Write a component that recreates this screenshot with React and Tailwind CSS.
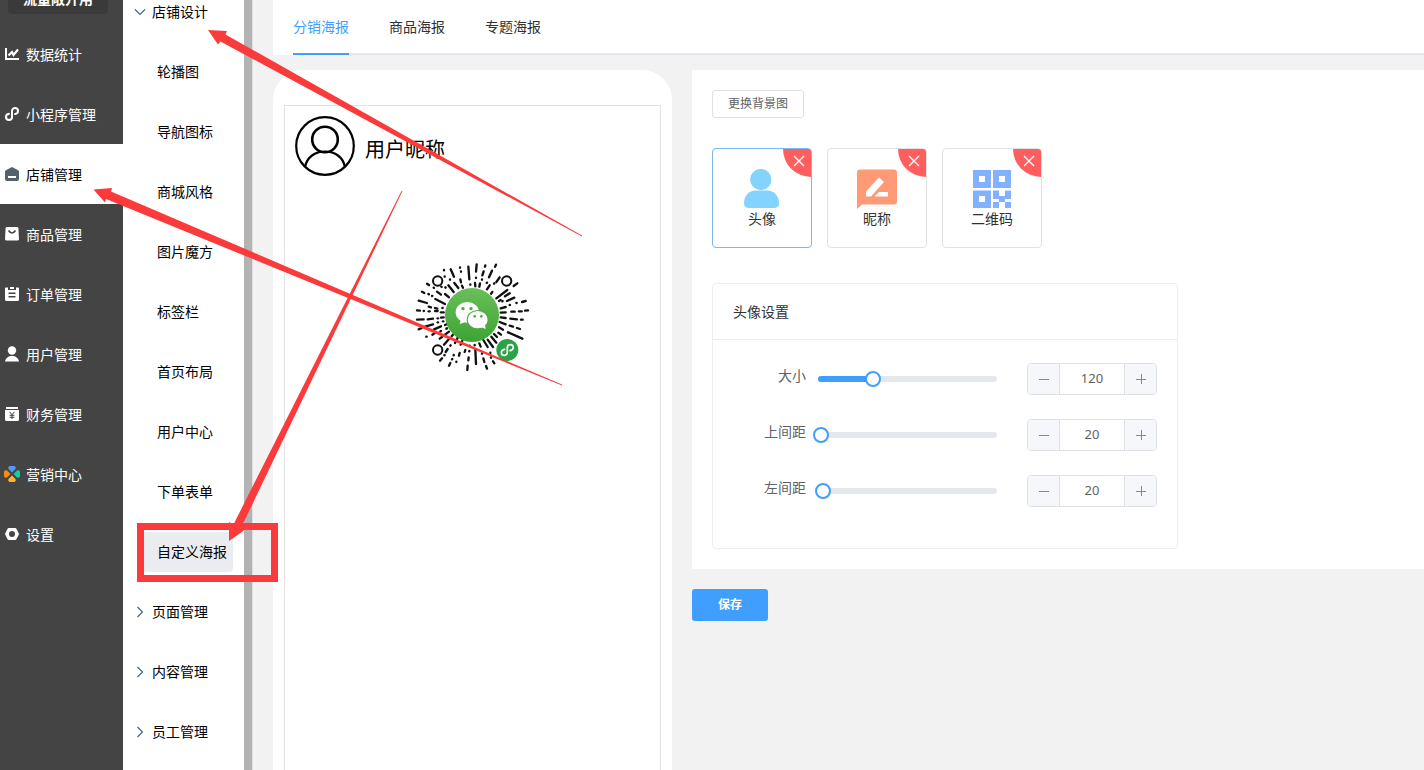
import React, { useState } from "react";

const ChartIcon = () => (
  <svg viewBox="0 0 14 14" className="w-3.5 h-3.5" fill="none" stroke="currentColor">
    <path d="M1 1v11h13" strokeWidth="2" />
    <path d="M3.5 8.5 7 5l1.500 3 4.500-5.500" strokeWidth="2.200" />
  </svg>
);

const MiniAppIcon = () => (
  <svg viewBox="0 0 14 14" className="w-3.5 h-3.5" fill="none" stroke="currentColor" strokeWidth="2" strokeLinecap="round">
    <path d="M4 6.800C2.200 7 1 8.200 1 9.900 1 11.600 2.300 12.900 4 12.900s3-1.300 3-3V4.100c0-1.700 1.300-3 3-3s3 1.300 3 3c0 1.700-1.200 2.800-2.900 3" />
  </svg>
);

const ShopIcon = () => (
  <svg viewBox="0 0 14 14" className="w-3.5 h-3.5" fill="#56606b">
    <path d="M7 0 13.200 3.200Q14 3.800 14 4.800V12q0 2-2 2H2q-2 0-2-2V4.800Q0 3.800.8 3.200Z" />
    <rect x="3" y="9" width="8" height="2" fill="#fff" />
  </svg>
);

const GoodsIcon = () => (
  <svg viewBox="0 0 14 14" className="w-3.5 h-3.5">
    <path d="M2 0h10q1.300 0 1.400 1.300L14 12q0 1.500-1.500 1.500h-11Q0 13.500 0 12L.6 1.300Q.7 0 2 0Z" fill="currentColor" />
    <path d="M3.500 3.500Q7 8.500 10.500 3.500" fill="none" stroke="#444" strokeWidth="1.600" />
  </svg>
);

const OrderIcon = () => (
  <svg viewBox="0 0 14 14" className="w-3.5 h-3.5">
    <path d="M0 1.500Q0 .5 1 .5h2V3h8V.5h2q1 0 1 1v11q0 1.500-1.500 1.500h-11Q0 14 0 12.500Z" fill="currentColor" />
    <path d="M5 1h4" stroke="currentColor" strokeWidth="2" />
    <path d="M3.500 6.200h7M3.500 9.800h7" stroke="#444" strokeWidth="1.600" />
  </svg>
);

const UserIcon = () => (
  <svg viewBox="0 0 14 14" className="w-3.5 h-3.5 overflow-visible" fill="currentColor">
    <circle cx="7" cy="3.500" r="4.200" />
    <path d="M0 14.500C.6 11 3.500 9 7 9s6.400 2 7 5.500Z" />
  </svg>
);

const FinanceIcon = () => (
  <svg viewBox="0 0 14 14" className="w-3.5 h-3.5">
    <path d="M1 0h12v2H1zM0 3h14v9.500q0 1.500-1.500 1.500h-11Q0 14 0 12.500Z" fill="currentColor" />
    <path d="M4.600 4.800 7 7.800l2.400-3M4.600 8.300h4.800M4.600 10.300h4.800M7 7.800V12" fill="none" stroke="#444" strokeWidth="1" />
  </svg>
);

const MarketIcon = () => (
  <svg viewBox="0 0 16 16" className="-mx-px w-4 h-4">
    <path d="M5.500 0h5Q12.500 1 11.500 3L8 6.500 4.500 3Q3.500 1 5.500 0Z" fill="#4c9bff" />
    <path d="M16 5.500v5Q15 12.500 13 11.500L9.500 8 13 4.500Q15 3.500 16 5.500Z" fill="#0fd0a5" />
    <path d="M10.500 16h-5Q3.500 15 4.500 13L8 9.500 11.500 13Q12.500 15 10.500 16Z" fill="#ffb52e" />
    <path d="M0 10.500v-5Q1 3.500 3 4.500L6.500 8 3 11.500Q1 12.500 0 10.500Z" fill="#ff8a0c" />
  </svg>
);

const SettingIcon = () => (
  <svg viewBox="0 0 14 14" className="w-3.5 h-3.5">
    <path d="M3.800 1h6.400q.8 0 1.200.7L13.600 6q.5 1 0 2l-2.200 4.300q-.4.700-1.200.7H3.800q-.8 0-1.200-.7L.4 8q-.5-1 0-2l2.200-4.300Q3 1 3.800 1Z" fill="currentColor" />
    <circle cx="7" cy="7" r="3" fill="#444" />
  </svg>
);

const mainMenu = [
  { name: "数据统计", icon: ChartIcon },
  { name: "小程序管理", icon: MiniAppIcon },
  { name: "店铺管理", icon: ShopIcon },
  { name: "商品管理", icon: GoodsIcon },
  { name: "订单管理", icon: OrderIcon },
  { name: "用户管理", icon: UserIcon },
  { name: "财务管理", icon: FinanceIcon },
  { name: "营销中心", icon: MarketIcon },
  { name: "设置", icon: SettingIcon },
];

const designMenu = ["轮播图", "导航图标", "商城风格", "图片魔方", "标签栏", "首页布局", "用户中心", "下单表单", "自定义海报"];
const closedGroups = ["页面管理", "内容管理", "员工管理"];
const tabs = ["分销海报", "商品海报", "专题海报"];

const Chevron = ({ open }) => (
  <svg viewBox="0 0 12 12" className="w-3 h-3 shrink-0" fill="none" stroke="#3f5f7d" strokeWidth="1.100">
    <path d={open ? "M1 3.500 6 8.500 11 3.500" : "M3.500 1 8.500 6 3.500 11"} />
  </svg>
);

// dashes of the mini program code, [x1, y1, x2, y2]
const codeDashes = [
  [231, 43, 229, 65], [229, 83, 229, 84], [226, 99, 227, 109], [206, 50, 209, 88], [212, 103, 212, 104],
  [153, 58, 163, 80], [181, 52, 181, 53], [184, 64, 184, 65], [182, 88, 184, 97], [187, 107, 190, 113],
  [257, 46, 256, 50], [252, 64, 248, 76], [247, 88, 247, 89], [241, 100, 239, 110], [289, 44, 286, 50],
  [277, 62, 268, 82], [262, 98, 261, 99], [300, 82, 290, 96], [284, 100, 283, 101], [270, 106, 262, 118],
  [353, 100, 342, 108], [323, 120, 290, 145], [278, 126, 274, 131], [135, 79, 135, 80], [133, 60, 133, 61],
  [151, 88, 151, 89], [164, 99, 176, 114], [146, 106, 162, 126], [82, 101, 88, 105], [102, 113, 103, 114],
  [125, 110, 126, 111], [137, 112, 138, 113], [112, 125, 124, 134], [136, 132, 148, 142],
  [67, 125, 74, 129], [86, 132, 88, 133], [97, 138, 98, 138], [57, 152, 82, 159],
  [107, 147, 136, 162], [87, 170, 94, 172], [106, 174, 113, 176], [128, 174, 129, 174], [52, 181, 61, 182],
  [72, 183, 73, 183], [87, 184, 90, 184], [106, 183, 114, 183], [124, 187, 132, 187], [52, 209, 72, 208],
  [84, 208, 100, 206], [114, 205, 115, 205], [124, 203, 132, 202], [57, 238, 66, 234], [76, 230, 100, 223],
  [114, 217, 115, 217], [130, 214, 131, 214], [103, 238, 124, 229], [136, 225, 143, 222], [80, 260, 81, 260],
  [98, 254, 106, 249], [122, 244, 124, 243], [140, 236, 142, 235], [120, 266, 127, 261], [136, 254, 148, 245],
  [133, 284, 148, 267], [156, 259, 161, 253], [121, 332, 127, 325], [134, 316, 135, 315], [138, 306, 144, 297],
  [152, 287, 153, 286], [148, 347, 152, 339], [157, 328, 158, 327], [162, 315, 162, 316], [166, 279, 174, 263],
  [170, 335, 170, 336], [178, 317, 180, 309], [183, 284, 188, 272], [203, 360, 204, 347], [206, 331, 207, 322],
  [195, 306, 197, 300], [209, 303, 209, 304], [210, 287, 210, 289], [229, 342, 227, 298], [225, 285, 225, 286],
  [262, 356, 259, 348], [254, 336, 251, 325], [247, 310, 247, 311], [243, 290, 239, 280], [284, 340, 280, 334],
  [274, 322, 274, 323], [272, 308, 272, 309], [264, 291, 251, 270], [280, 291, 264, 269],
  [290, 278, 275, 260], [292, 261, 283, 252], [368, 266, 325, 247], [310, 239, 298, 232], [304, 254, 296, 248],
  [361, 237, 352, 234], [340, 230, 330, 227], [318, 223, 300, 216], [369, 209, 364, 209], [352, 208, 332, 206],
  [318, 204, 303, 202], [385, 181, 376, 182], [366, 184, 358, 184], [345, 185, 335, 185], [318, 187, 303, 188],
  [378, 153, 367, 156], [351, 159, 350, 159], [331, 165, 330, 165], [318, 171, 303, 175], [344, 143, 322, 153],
  [309, 153, 308, 154], [330, 130, 316, 139], [303, 150, 298, 153],
];

const MiniProgramCode = () => (
  <svg viewBox="40 30 360 345" className="w-[120px] h-[115px]" fill="none">
    <defs>
      <linearGradient id="wechat" x1="0" y1="0" x2="0" y2="1">
        <stop offset="0" stopColor="#6abf58" />
        <stop offset="1" stopColor="#3da435" />
      </linearGradient>
    </defs>
    <g stroke="#111" strokeWidth="7" strokeLinecap="round">
      {codeDashes.map(([x1, y1, x2, y2], i) => (
        <line key={i} x1={x1} y1={y1} x2={x2} y2={y2} />
      ))}
    </g>
    <g stroke="#111" strokeWidth="6" fill="#fff">
      <circle cx="114" cy="93" r="14" />
      <circle cx="321" cy="93" r="14" />
      <circle cx="114" cy="300" r="14" />
    </g>
    <circle cx="217" cy="195" r="81" fill="url(#wechat)" />
    <g fill="#fff">
      <ellipse cx="203" cy="187" rx="35" ry="31" />
      <path d="M184 208 180 222 200 215Z" />
      <ellipse cx="234" cy="209" rx="33" ry="29" fill="#4dac42" />
      <ellipse cx="234" cy="209" rx="30" ry="26" />
      <path d="M243 231 258 237 256 222Z" />
    </g>
    <g fill="#4dac42">
      <circle cx="190" cy="176" r="5" />
      <circle cx="214" cy="176" r="5" />
      <circle cx="225" cy="199" r="4" />
      <circle cx="245" cy="199" r="4" />
    </g>
    <circle cx="323" cy="300" r="33" fill="#2ba245" />
    <path
      d="M315 298c-6 1-10 5-10 10 0 5 4 8 9 8s9-4 9-9v-14c0-5 4-9 9-9s9 3 9 8c0 5-4 9-10 10"
      stroke="#fff"
      strokeWidth="5"
      strokeLinecap="round"
    />
  </svg>
);

const AvatarOutline = () => (
  <svg viewBox="0 0 60 60" className="w-[60px] h-[60px]" fill="none" stroke="#000" strokeWidth="2.200">
    <circle cx="30" cy="30" r="28.800" />
    <circle cx="30" cy="23.500" r="12.800" strokeWidth="2.600" />
    <path d="M10 51C12 41 20 35.500 30 35.500S48 41 50 51" />
  </svg>
);

const HeadIcon = () => (
  <svg viewBox="0 0 40 40" className="w-10 h-10" fill="#82d4ff">
    <circle cx="18.800" cy="10.500" r="10.600" />
    <path d="M13.500 21.500h12c6.500 0 11.500 5.500 11.500 12.500 0 4-2 5-6 5H8c-4 0-6-1-6-5C2 27 7 21.500 13.500 21.500Z" />
  </svg>
);

const NicknameIcon = () => (
  <svg viewBox="0 0 40 40" className="w-10 h-10">
    <path d="M3 .5h34q3 0 3 3v29q0 3-3 3H5L0 40V3.500q0-3 3-3Z" fill="#ff9a76" />
    <path d="M9 27.500v-5L22 8.500 27 13 14 27.500ZM17.500 27.500l4.500-4.500h9v4.500Z" fill="#fff" />
  </svg>
);

const QrIcon = () => (
  <svg viewBox="0 0 40 40" className="w-10 h-10" fill="#82b1ff">
    <path fillRule="evenodd" d="M1 1h18v18H1zM7 7v6h6V7zM21 1h18v18H21zM27 7v6h6V7zM1 21.500h18v17.500H1zM7 27v6h6v-6z" />
    <path d="M21 21.500h6V27h6v-5.500h6V30h-6v3h-6v-3h-6zM21 33h6v6h-6zM33 33h6v6h-6z" />
  </svg>
);

const elements = [
  { name: "头像", icon: HeadIcon },
  { name: "昵称", icon: NicknameIcon },
  { name: "二维码", icon: QrIcon },
];

const SliderRow = ({ id, label, min, max, value, onChange }) => {
  const percent = ((value - min) / (max - min)) * 100;
  const change = (n) => onChange(Math.min(max, Math.max(min, n)));

  return (
    <div className="flex items-center h-8">
      <label htmlFor={id} className="w-[73px] pb-1.5 text-right text-[#606266]">
        {label}
      </label>
      <div className="relative ml-3 flex-1 h-1.5 rounded-full bg-[#e4e7ed]">
        <div className="h-1.5 rounded-l-full bg-[#409eff]" style={{ width: `${percent}%` }}></div>
        <input
          id={id}
          type="range"
          min={min}
          max={max}
          value={value}
          onChange={(e) => change(Number(e.target.value))}
          className="absolute -inset-x-2 -top-[5px] h-4 appearance-none bg-transparent cursor-pointer [&::-webkit-slider-thumb]:appearance-none [&::-webkit-slider-thumb]:w-4 [&::-webkit-slider-thumb]:h-4 [&::-webkit-slider-thumb]:rounded-full [&::-webkit-slider-thumb]:border-2 [&::-webkit-slider-thumb]:border-[#409eff] [&::-webkit-slider-thumb]:bg-white"
        />
      </div>
      <div className="ml-[30px] flex w-[130px] h-8 rounded border border-[#dcdfe6] overflow-hidden">
        <button
          type="button"
          aria-label={`${label} -`}
          onClick={() => change(value - 1)}
          className="w-8 shrink-0 flex items-center justify-center bg-[#f5f7fa] border-r border-[#dcdfe6]"
        >
          <svg viewBox="0 0 10 10" className="w-2.5 h-2.5" stroke="#85878b">
            <path d="M0 5.500h10" />
          </svg>
        </button>
        <input
          type="text"
          aria-label={label}
          value={value}
          onChange={(e) => change(Number(e.target.value) || min)}
          className="w-0 flex-1 pb-0.5 text-center text-[13px] text-[#606266] outline-none"
        />
        <button
          type="button"
          aria-label={`${label} +`}
          onClick={() => change(value + 1)}
          className="w-8 shrink-0 flex items-center justify-center bg-[#f5f7fa] border-l border-[#dcdfe6]"
        >
          <svg viewBox="0 0 10 10" className="w-2.5 h-2.5" stroke="#85878b">
            <path d="M0 5.500h10M5.500 0v10" />
          </svg>
        </button>
      </div>
    </div>
  );
};

const App = () => {
  const [activeTab, setActiveTab] = useState("分销海报");
  const [activeElement, setActiveElement] = useState("头像");
  const [avatar, setAvatar] = useState({ size: 120, top: 20, left: 20 });

  return (
    <div className="relative flex h-screen overflow-hidden bg-[#f2f2f2] text-sm text-[#303133] font-['Noto_Sans','Noto_Sans_CJK_SC',sans-serif]">
      {/* Main menu */}
      <nav className="w-[123px] shrink-0 bg-[#444] text-white">
        <div className="flex items-end h-6 px-2 pb-2.5 overflow-hidden">
          <button type="button" className="w-[100px] h-[30px] shrink-0 rounded bg-[#3a3a3a] font-bold">
            流量敞开用
          </button>
        </div>
        {mainMenu.map(({ name, icon: Icon }) => (
          <a
            key={name}
            href="#"
            className={`flex items-center h-[60px] pl-[5px] gap-[7px] ${name === "店铺管理" ? "bg-white text-black" : ""}`}
          >
            <Icon />
            <span className="pt-0.5">{name}</span>
          </a>
        ))}
      </nav>

      {/* Sub menu */}
      <nav className="w-[121px] shrink-0 overflow-hidden bg-white text-black">
        <div className="-mt-[18px]">
          <a href="#" className="flex items-center h-[60px] pl-[11px] gap-1.5">
            <Chevron open />
            店铺设计
          </a>
          {designMenu.map((name) => (
            <div key={name} className="flex items-center h-[60px] pl-5">
              <a
                href="#"
                className={`flex items-center h-10 pl-3.5 pr-1.5 rounded ${name === "自定义海报" ? "bg-[#ebecf0]" : ""}`}
              >
                {name}
              </a>
            </div>
          ))}
          {closedGroups.map((name) => (
            <a key={name} href="#" className="flex items-center h-[60px] pl-[11px] gap-1.5">
              <Chevron />
              {name}
            </a>
          ))}
        </div>
      </nav>
      <div className="w-[9px] shrink-0 bg-[#b3b3b3] border-r border-[#dfdfdf]"></div>

      {/* Content */}
      <main className="flex-1 flex flex-col ml-5 min-w-0">
        <div className="h-[55px] shrink-0 pl-5 bg-white">
          <div className="flex gap-10 h-full border-b-2 border-[#e4e7ed]">
            {tabs.map((tab) => (
              <button
                key={tab}
                type="button"
                onClick={() => setActiveTab(tab)}
                className={`h-[55px] border-b-2 ${
                  activeTab === tab ? "border-[#409eff] text-[#409eff]" : "border-transparent"
                }`}
              >
                {tab}
              </button>
            ))}
          </div>
        </div>

        <div className="flex gap-5 mt-[15px] flex-1 min-h-0">
          {/* Phone preview */}
          <div className="w-[399px] h-[800px] shrink-0 px-[11px] pt-[35px] rounded-[30px] bg-white">
            <div className="h-full border border-[#e2e2e2]">
              <div className="flex items-center gap-2.5 pt-2.5 pl-2.5">
                <AvatarOutline />
                <span className="pt-2 text-xl text-black">用户昵称</span>
              </div>
              <div className="flex justify-center mt-[84px]">
                <MiniProgramCode />
              </div>
            </div>
          </div>

          {/* Settings */}
          <div className="flex-1 min-w-0">
            <div className="bg-white p-5">
              <button
                type="button"
                className="block h-7 px-[15px] rounded-[3px] border border-[#dcdfe6] text-xs text-[#606266]"
              >
                更换背景图
              </button>

              <div className="flex gap-[15px] mt-[30px]">
                {elements.map(({ name, icon: Icon }) => (
                  <div
                    key={name}
                    className={`relative w-[100px] h-[100px] rounded border overflow-hidden ${
                      activeElement === name ? "border-[#7ab8f5]" : "border-[#e2e2e2]"
                    }`}
                  >
                    <button
                      type="button"
                      onClick={() => setActiveElement(name)}
                      className="w-full h-full flex flex-col items-center pt-5"
                    >
                      <Icon />
                      {name}
                    </button>
                    <button
                      type="button"
                      aria-label="删除"
                      className="absolute top-0 right-0 w-7 h-7 flex items-center justify-center rounded-bl-full bg-[#ff5e5e]"
                    >
                      <svg viewBox="0 0 12 12" className="ml-1 mb-1 w-3 h-3" stroke="#fff" strokeWidth="1.300">
                        <path d="M1 1 11 11M11 1 1 11" />
                      </svg>
                    </button>
                  </div>
                ))}
              </div>

              <div className="mt-[35px] w-[466px] rounded border border-[#ebeef5]">
                <h2 className="h-14 px-5 leading-[56px] border-b border-[#ebeef5]">头像设置</h2>
                <div className="flex flex-col gap-6 px-5 pt-[23px] pb-[41px]">
                  <SliderRow
                    id="size"
                    label="大小"
                    min={40}
                    max={300}
                    value={avatar.size}
                    onChange={(size) => setAvatar((prev) => ({ ...prev, size }))}
                  />
                  <SliderRow
                    id="top"
                    label="上间距"
                    min={0}
                    max={1200}
                    value={avatar.top}
                    onChange={(top) => setAvatar((prev) => ({ ...prev, top }))}
                  />
                  <SliderRow
                    id="left"
                    label="左间距"
                    min={0}
                    max={750}
                    value={avatar.left}
                    onChange={(left) => setAvatar((prev) => ({ ...prev, left }))}
                  />
                </div>
              </div>
            </div>

            <button type="button" className="block mt-5 w-[76px] h-8 rounded-[3px] bg-[#409eff] text-xs font-bold text-white">
              保存
            </button>
          </div>
        </div>
      </main>

      {/* Guide arrows over the page */}
      <svg viewBox="0 0 600 600" className="absolute top-0 left-0 w-[600px] h-[600px] pointer-events-none" fill="#fb3b3b">
        <path d="M208 30 227 31 225.500 34.500 582 235.500V236.500L220.500 41.500 218 44.500Z" />
        <path d="M93.500 189.500 112 188 111 191.500 562 384.500V385.500L106 199 105 202.500Z" />
        <path d="M229 541 229 522 233.500 524.500 401.500 191H402.500L241 528 244 530.500Z" />
        <rect x="140.500" y="526.500" width="134" height="52" fill="none" stroke="#fb3b3b" strokeWidth="7" />
      </svg>
    </div>
  );
};

export default App;
